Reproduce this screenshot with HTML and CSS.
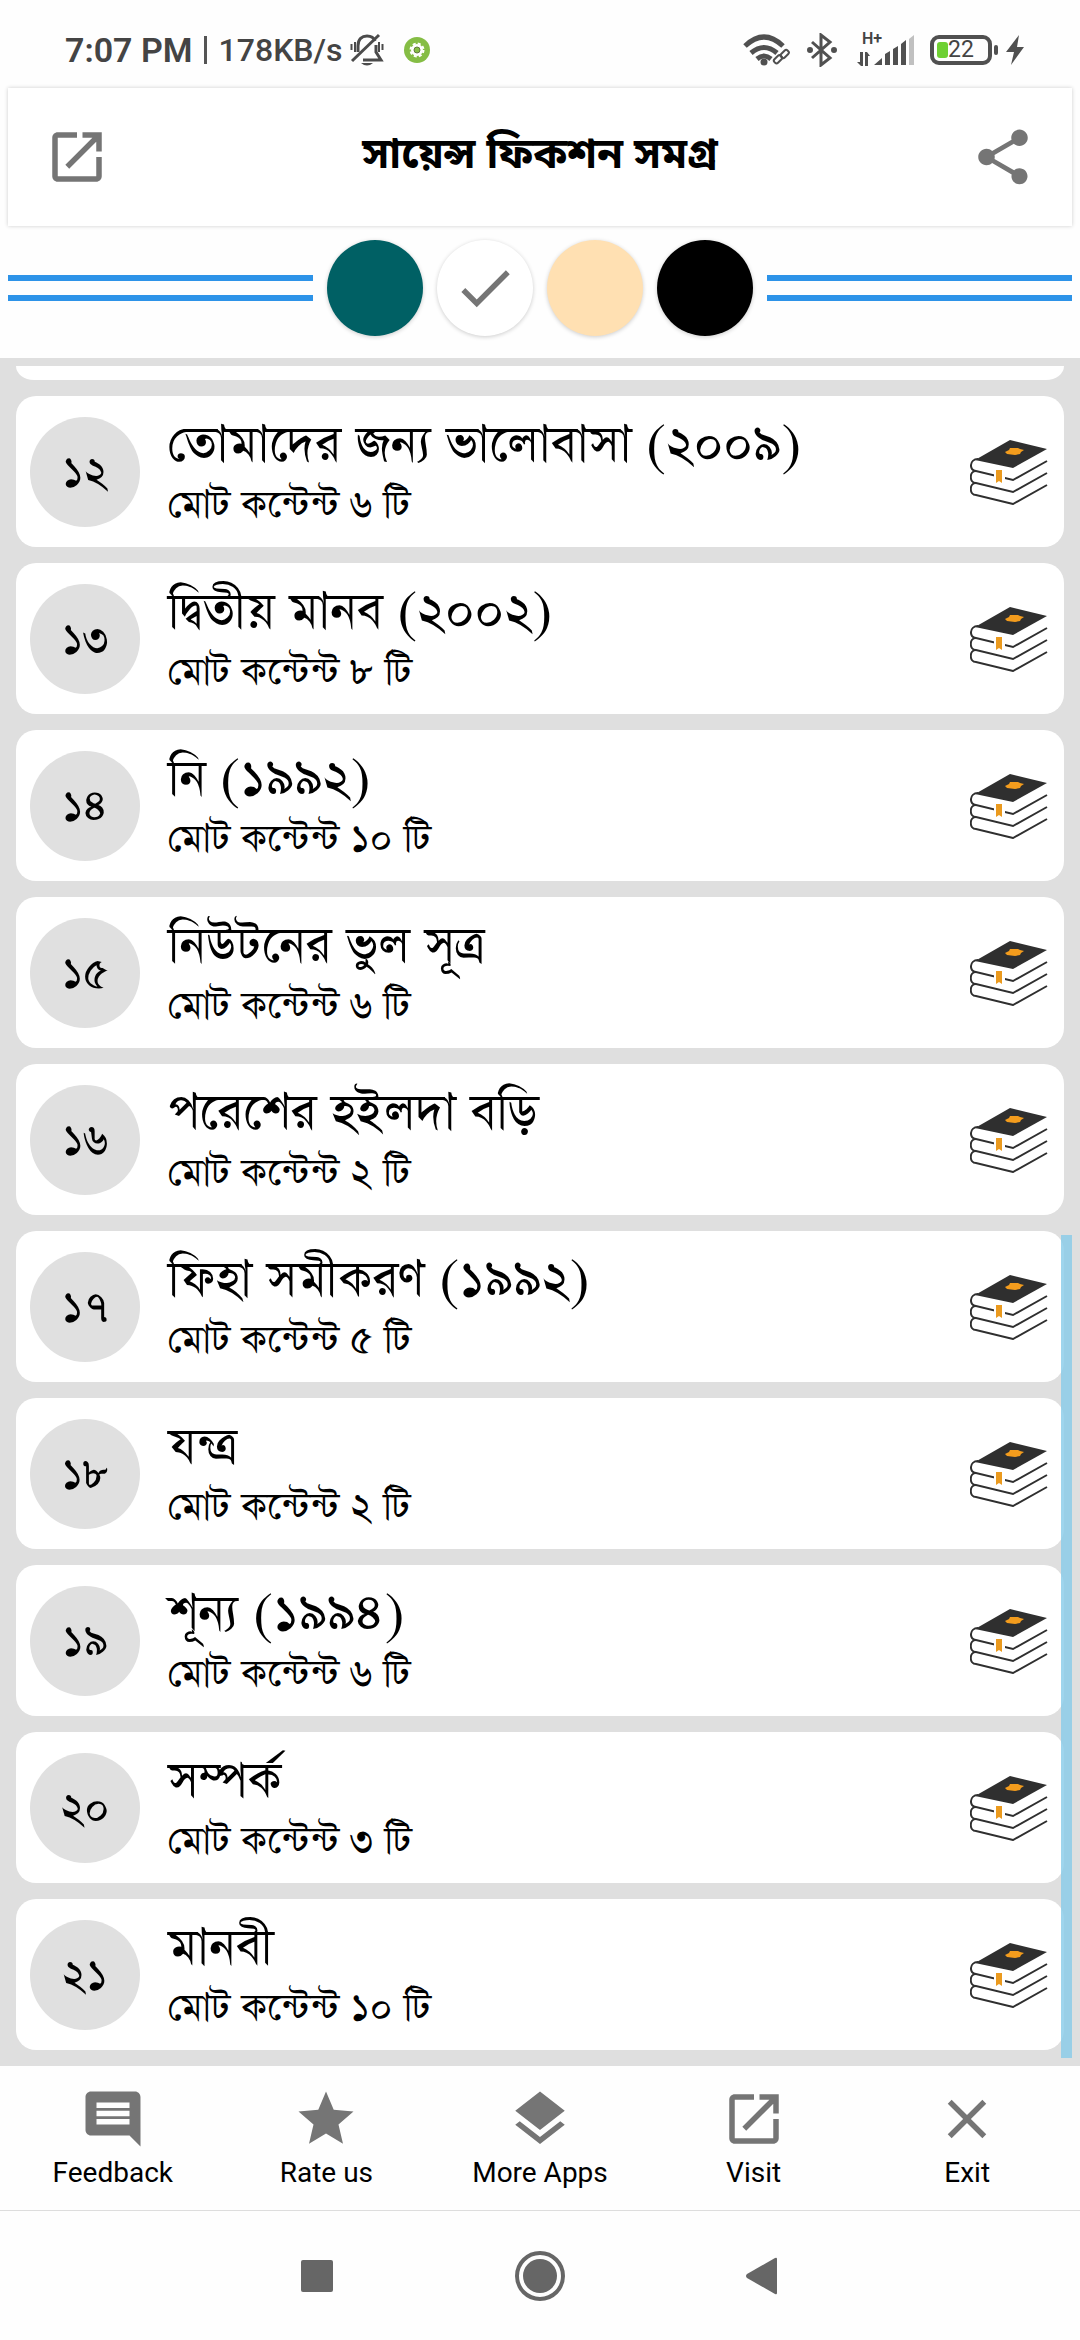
FILE: index.html
```html
<!DOCTYPE html>
<html lang="bn">
<head>
<meta charset="utf-8">
<meta name="viewport" content="width=device-width, initial-scale=1">
<title>সায়েন্স ফিকশন সমগ্র</title>
<link rel="stylesheet" href="styles.css">
</head>
<body>
<svg class="defs" aria-hidden="true">
  <symbol id="open" viewBox="0 0 24 24"><path d="M19 19H5V5h7V3H5c-1.11 0-2 .9-2 2v14c0 1.1.89 2 2 2h14c1.1 0 2-.9 2-2v-7h-2v7zM14 3v2h3.59l-9.83 9.83 1.41 1.41L19 6.41V10h2V3h-7z"/></symbol>
  <symbol id="books" viewBox="0 0 78 66">
    <path d="M5 21 40 1l37 9-34 19z" fill="#2f2f2f"/>
    <g fill="none" stroke="#2f2f2f" stroke-width="2">
      <path d="M8 20C-1 20-1 32 6 32l37 9 34-19"/>
      <path d="M6 32c-7 0-7 12 0 12l37 9 34-19"/>
      <path d="M6 44c-7 0-7 12 0 12l37 9 34-19"/>
    </g>
    <path d="M24 30h11v12H24z" fill="#fff"/>
    <path d="M26 31h6v13l-3-2-3 2z" fill="#eb9a1e"/>
    <path d="m35 13 4-2 1-2h8l2 1 4 1-3 2-1 2-5 1-8-1z" fill="#f39c1d"/>
  </symbol>
</svg>

<div class="status">
  <span class="clock">7:07 PM</span>
  <span class="divider"></span>
  <span class="speed">178KB/s</span>
  <svg class="bell" viewBox="0 0 34 34" fill="none" stroke="#4b4b4b" stroke-width="3">
    <path d="M8 19V13C8 6 12 3 17 3c4 0 7 2 8 5M26 12v7l5 8H13"/><path d="M2 28 29 2"/>
    <path d="M1.500 11v6M5 9v10M29 9v10M32.500 11v6" stroke-width="2"/><path d="M11 30h12q-6 5-12 0z" fill="#4b4b4b" stroke="none"/>
  </svg>
  <svg class="gear" viewBox="0 0 26 26"><circle cx="13" cy="13" r="13" fill="#85bd45"/><circle cx="13" cy="13" r="4.500" fill="none" stroke="#fff" stroke-width="3"/><circle cx="13" cy="13" r="6.500" fill="none" stroke="#fff" stroke-width="2" stroke-dasharray="3 2.100"/><circle cx="13" cy="13" r="3" fill="none" stroke="#63793f"/></svg>
  <span class="grow"></span>
  <svg class="wifi" viewBox="0 0 48 32" fill="none" stroke="#505050" stroke-width="5">
    <path d="M2 12Q21-6 40 12M8 19q13-11 26 0M14 25q7-6 14 0"/><circle cx="21" cy="28" r="3.500" fill="#505050" stroke="none"/>
    <g stroke="#fff" stroke-width="5"><path d="M33 29 44 18"/></g>
    <g stroke-width="2"><rect x="31" y="23" width="9" height="5" rx="2" transform="rotate(-45 35 26)"/><rect x="37" y="18" width="9" height="5" rx="2" transform="rotate(-45 41 20)"/></g>
  </svg>
  <svg class="bluetooth" viewBox="0 0 30 34" fill="none" stroke="#505050" stroke-width="3"><path d="m5 9 18 16-9 7V2l9 7L5 25"/><circle cx="3" cy="17" r="1.500"/><circle cx="27" cy="17" r="1.500"/></svg>
  <span class="mobile">
    <span class="network">H+</span>
    <svg class="signal" viewBox="0 0 57 32" fill="#505050">
      <path d="M3 18h3v14H4l-4-4h3zM8 32V18h2l3 4h-2v10zM17 31l8-7v7zM28 31V20l5-3v14zM36 31V15l5-3v19zM44 31V10l5-4v25z"/><path d="M52 31V5l5-4v30z" fill="#c0c0c0"/>
    </svg>
  </span>
  <span class="battery"><span class="charge"></span>22</span>
  <svg class="bolt" viewBox="0 0 18 30" fill="#505050"><path d="M13 0 0 17h8L5 30 18 12h-7z"/></svg>
</div>

<header class="header">
  <button class="icon-button" type="button" aria-label="Open"><svg class="icon"><use href="#open"/></svg></button>
  <h1 class="heading">সায়েন্স ফিকশন সমগ্র</h1>
  <button class="icon-button" type="button" aria-label="Share"><svg class="icon" viewBox="0 0 24 24"><path d="M18 16.080c-.76 0-1.440.3-1.960.77L8.910 12.700c.05-.23.09-.46.09-.7s-.04-.47-.09-.7l7.050-4.110c.54.5 1.250.81 2.040.81 1.660 0 3-1.340 3-3s-1.340-3-3-3-3 1.340-3 3c0 .24.04.47.09.7L8.040 9.810C7.500 9.310 6.790 9 6 9c-1.660 0-3 1.340-3 3s1.340 3 3 3c.79 0 1.500-.31 2.040-.81l7.120 4.160c-.05.21-.08.43-.08.65 0 1.610 1.310 2.920 2.920 2.920s2.920-1.310 2.920-2.920-1.310-2.920-2.920-2.920z"/></svg></button>
</header>

<div class="themes">
  <span class="rule"></span>
  <button class="theme teal" type="button" aria-label="Teal"></button>
  <button class="theme white" type="button" aria-label="White" aria-pressed="true"><svg class="icon" viewBox="0 0 24 24"><path d="M9 16.170 4.830 12l-1.420 1.410L9 19 21 7l-1.410-1.410z"/></svg></button>
  <button class="theme sand" type="button" aria-label="Sand"></button>
  <button class="theme black" type="button" aria-label="Black"></button>
  <span class="rule"></span>
</div>

<main class="library">
  <ul class="list">
    <li class="card-end"></li>
    <li class="card"><span class="number">১২</span><div class="text"><h2 class="title">তোমাদের জন্য ভালোবাসা (২০০৯)</h2><p class="count">মোট কন্টেন্ট ৬ টি</p></div><svg class="books"><use href="#books"/></svg></li>
    <li class="card"><span class="number">১৩</span><div class="text"><h2 class="title">দ্বিতীয় মানব (২০০২)</h2><p class="count">মোট কন্টেন্ট ৮ টি</p></div><svg class="books"><use href="#books"/></svg></li>
    <li class="card"><span class="number">১৪</span><div class="text"><h2 class="title">নি (১৯৯২)</h2><p class="count">মোট কন্টেন্ট ১০ টি</p></div><svg class="books"><use href="#books"/></svg></li>
    <li class="card"><span class="number">১৫</span><div class="text"><h2 class="title">নিউটনের ভুল সূত্র</h2><p class="count">মোট কন্টেন্ট ৬ টি</p></div><svg class="books"><use href="#books"/></svg></li>
    <li class="card"><span class="number">১৬</span><div class="text"><h2 class="title">পরেশের হইলদা বড়ি</h2><p class="count">মোট কন্টেন্ট ২ টি</p></div><svg class="books"><use href="#books"/></svg></li>
    <li class="card"><span class="number">১৭</span><div class="text"><h2 class="title">ফিহা সমীকরণ (১৯৯২)</h2><p class="count">মোট কন্টেন্ট ৫ টি</p></div><svg class="books"><use href="#books"/></svg></li>
    <li class="card"><span class="number">১৮</span><div class="text"><h2 class="title">যন্ত্র</h2><p class="count">মোট কন্টেন্ট ২ টি</p></div><svg class="books"><use href="#books"/></svg></li>
    <li class="card"><span class="number">১৯</span><div class="text"><h2 class="title">শূন্য (১৯৯৪)</h2><p class="count">মোট কন্টেন্ট ৬ টি</p></div><svg class="books"><use href="#books"/></svg></li>
    <li class="card"><span class="number">২০</span><div class="text"><h2 class="title">সম্পর্ক</h2><p class="count">মোট কন্টেন্ট ৩ টি</p></div><svg class="books"><use href="#books"/></svg></li>
    <li class="card"><span class="number">২১</span><div class="text"><h2 class="title">মানবী</h2><p class="count">মোট কন্টেন্ট ১০ টি</p></div><svg class="books"><use href="#books"/></svg></li>
  </ul>
  <span class="scrollbar"></span>
</main>

<nav class="tabs">
  <button class="tab" type="button"><svg class="icon" viewBox="0 0 24 24"><path d="M21.990 4c0-1.100-.89-2-1.990-2H4c-1.100 0-2 .9-2 2v12c0 1.100.9 2 2 2h14l4 4-.01-18zM18 14H6v-2h12v2zm0-3H6V9h12v2zm0-3H6V6h12v2z"/></svg>Feedback</button>
  <button class="tab" type="button"><svg class="icon" viewBox="0 0 24 24"><path d="M12 17.270 18.180 21l-1.640-7.030L22 9.240l-7.190-.61L12 2 9.190 8.630 2 9.240l5.460 4.730L5.820 21z"/></svg>Rate us</button>
  <button class="tab" type="button"><svg class="icon" viewBox="0 0 24 24"><path d="m11.990 18.540-7.370-5.730L3 14.070l9 7 9-7-1.630-1.270-7.380 5.740zM12 16l7.360-5.730L21 9l-9-7-9 7 1.630 1.270L12 16z"/></svg>More Apps</button>
  <button class="tab" type="button"><svg class="icon"><use href="#open"/></svg>Visit</button>
  <button class="tab" type="button"><svg class="icon" viewBox="0 0 24 24"><path d="M19 6.410 17.590 5 12 10.590 6.410 5 5 6.410 10.590 12 5 17.590 6.410 19 12 13.410 17.590 19 19 17.590 13.410 12z"/></svg>Exit</button>
</nav>

<div class="system">
  <button class="key" type="button" aria-label="Recent apps"><svg class="key-icon" viewBox="0 0 50 50"><rect x="9" y="9" width="32" height="32" rx="2"/></svg></button>
  <button class="key" type="button" aria-label="Home"><svg class="key-icon" viewBox="0 0 50 50"><circle cx="25" cy="25" r="23" fill="none" stroke="#666" stroke-width="4"/><circle cx="25" cy="25" r="17"/></svg></button>
  <button class="key" type="button" aria-label="Back"><svg class="key-icon" viewBox="0 0 50 50"><path d="M37 7q2-1 2 1v34q0 2-2 1L9 27q-2-2 0-4z"/></svg></button>
</div>
</body>
</html>
```
FILE: styles.css
```css
* { box-sizing: border-box; }

body {
  display: flex;
  flex-direction: column;
  min-height: 100vh;
  margin: 0;
  background: #fefefe;
  color: #000;
  font-family: Roboto, "Noto Sans Bengali", sans-serif;
}

h1, h2, p, ul { margin: 0; padding: 0; }
h2 { font-weight: 400; }
ul { list-style: none; }
svg { display: block; flex: none; }
button { padding: 0; border: 0; background: none; color: inherit; font: inherit; }

.defs { position: absolute; width: 0; height: 0; }
.icon { width: 66px; height: 66px; fill: #757575; }

.status {
  display: flex;
  align-items: center;
  height: 88px;
  padding: 28px 56px 16px 65px;
  color: #444;
}
.clock { font-size: 34px; font-weight: 600; line-height: 44px; }
.divider { width: 3px; height: 28px; margin: 0 12px 0 11px; background: #555; }
.speed { font-size: 32px; font-weight: 500; line-height: 44px; }
.bell { width: 34px; height: 34px; margin-left: 7px; }
.gear { width: 26px; height: 26px; margin-left: 20px; }
.grow { flex: 1; }
.wifi { width: 48px; height: 32px; }
.bluetooth { width: 30px; height: 34px; margin-left: 16px; }
.mobile { position: relative; margin-left: 20px; }
.network {
  position: absolute;
  left: 5px;
  top: -4px;
  font-size: 16px;
  font-weight: 600;
  line-height: 18px;
}
.signal { width: 57px; height: 32px; }
.battery {
  position: relative;
  display: flex;
  align-items: center;
  justify-content: center;
  width: 62px;
  height: 30px;
  margin-left: 16px;
  border: 4px solid #505050;
  border-radius: 9px;
  font-size: 23px;
  line-height: 22px;
}
.battery::after {
  content: "";
  position: absolute;
  right: -10px;
  top: 6px;
  width: 4px;
  height: 10px;
  border-radius: 2px;
  background: #505050;
}
.charge {
  position: absolute;
  left: 3px;
  top: 3px;
  width: 11px;
  height: 16px;
  border-radius: 3px;
  background: #6fd032;
}
.bolt { width: 18px; height: 30px; margin-left: 14px; }

.header {
  display: flex;
  align-items: center;
  justify-content: space-between;
  height: 138px;
  margin: 0 8px;
  padding: 0 36px;
  background: #fff;
  box-shadow: 0 0 4px #0003;
}
.heading {
  font-family: "Noto Sans Bengali", sans-serif;
  font-size: 42px;
  font-weight: 700;
  line-height: 66px;
}

.themes {
  display: flex;
  align-items: center;
  gap: 14px;
  padding: 14px 8px 22px;
}
.rule {
  flex: 1;
  height: 26px;
  border: solid #2d93e8;
  border-width: 6px 0;
}
.theme {
  display: grid;
  place-items: center;
  width: 96px;
  height: 96px;
  border-radius: 50%;
  box-shadow: 0 1px 4px #0003;
}
.teal { background: #006064; }
.white { background: #fff; }
.sand { background: #ffe0b2; }
.black { background: #000; }

.library {
  position: relative;
  flex: 1;
  padding: 8px 16px 16px;
  background: #dfdfdf;
}
.list { display: flex; flex-direction: column; gap: 16px; }
.card-end { height: 14px; border-radius: 0 0 18px 18px / 0 0 14px 14px; background: #fff; }
.card {
  display: flex;
  align-items: center;
  height: 151px;
  padding: 0 16px 0 14px;
  border-radius: 20px;
  background: #fff;
}
.number {
  display: grid;
  place-items: center;
  width: 110px;
  height: 110px;
  padding-top: 4px;
  border-radius: 50%;
  background: #e0e0e0;
  font-family: FreeSerif, "Noto Serif Bengali", serif;
  font-size: 50px;
  line-height: 60px;
}
.text {
  flex: 1;
  margin-left: 28px;
  padding-top: 6px;
  font-family: FreeSerif, "Noto Serif Bengali", serif;
}
.title { font-size: 59px; line-height: 64px; }
.count { font-size: 45px; line-height: 56px; }
.books { width: 78px; height: 66px; }
.scrollbar {
  position: absolute;
  right: 8px;
  bottom: 8px;
  width: 11px;
  height: 823px;
  background: #87cbe8cc;
}

.tabs {
  display: grid;
  grid-template-columns: repeat(5, 1fr);
  height: 145px;
  padding: 20px 6px 0;
  border-bottom: 1px solid #ddd;
}
.tab {
  display: flex;
  flex-direction: column;
  align-items: center;
  gap: 5px;
  font-size: 28px;
  line-height: 32px;
}

.system {
  display: grid;
  grid-template-columns: repeat(3, 223px);
  justify-content: center;
  height: 129px;
}
.key { display: grid; place-items: center; }
.key-icon { width: 50px; height: 50px; fill: #666; }
```
